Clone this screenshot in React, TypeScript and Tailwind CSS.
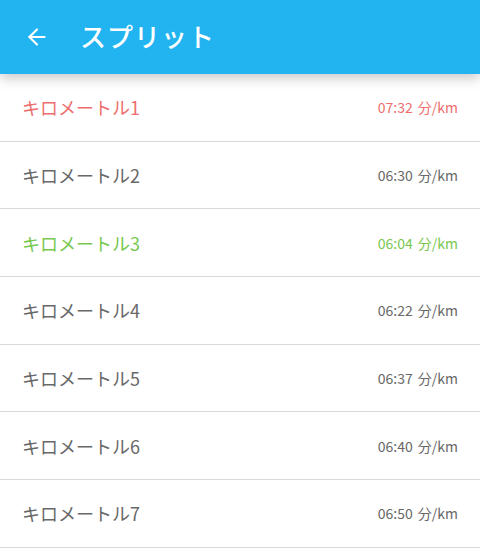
import { ArrowLeft } from "lucide-react";

const splits = [
  { km: 1, pace: "07:32", tone: "text-[#ee6e6e]" },
  { km: 2, pace: "06:30", tone: "text-[#686868]" },
  { km: 3, pace: "06:04", tone: "text-[#78c850]" },
  { km: 4, pace: "06:22", tone: "text-[#686868]" },
  { km: 5, pace: "06:37", tone: "text-[#686868]" },
  { km: 6, pace: "06:40", tone: "text-[#686868]" },
  { km: 7, pace: "06:50", tone: "text-[#686868]" },
];

const font = { fontFamily: "'Noto Sans CJK JP', 'Noto Sans', sans-serif" };

export default function App() {
  return (
    <div className="w-[480px] h-[548px] overflow-hidden bg-white" style={font}>
      {/* App bar */}
      <header className="relative z-10 h-[74px] bg-[#22b4f1] flex items-center shadow-[0_4px_12px_rgba(0,0,0,0.22)]">
        <ArrowLeft className="ml-[24px] w-[26px] h-[26px] text-white" strokeWidth={2} />
        <h1 className="ml-[30px] mb-[2px] text-white text-[26px] font-medium tracking-[1px] leading-none">
          スプリット
        </h1>
      </header>

      {/* Split list */}
      <ul>
        {splits.map((s) => (
          <li
            key={s.km}
            className={`h-[67.7px] flex items-center justify-between pl-[22px] pr-[22px] border-b border-[#d9d9d9] ${s.tone}`}
          >
            <span className="text-[18px] leading-none">キロメートル{s.km}</span>
            <span className="text-[14px] leading-none flex gap-[5px]">
              <span>{s.pace}</span>
              <span>分/km</span>
            </span>
          </li>
        ))}
      </ul>
    </div>
  );
}
